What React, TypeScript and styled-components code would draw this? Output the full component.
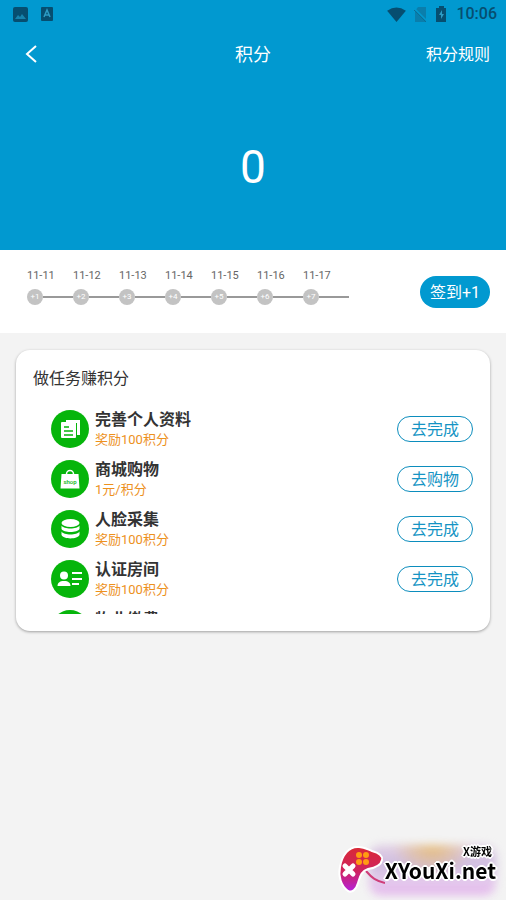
import React from "react";
import styled, { createGlobalStyle } from "styled-components";

const BLUE = "#0199d0";

const GlobalStyle = createGlobalStyle`
  * { box-sizing: border-box; }
  html, body, #root { min-height: 100vh; }
  body {
    margin: 0;
    background: #f3f3f3;
    font-family: Roboto, "Noto Sans CJK SC", sans-serif;
    color: #333;
  }
  button { font-family: inherit; cursor: pointer; }
`;

const Page = styled.div`
  display: flex;
  flex-direction: column;
  min-height: 100vh;
`;

const Hero = styled.header`
  display: flex;
  flex-direction: column;
  background: ${BLUE};
  color: #fff;
`;

const StatusBar = styled.div`
  display: flex;
  align-items: center;
  justify-content: space-between;
  height: 28px;
  padding: 0 9px 0 13px;
  color: #064e70;
`;

const StatusGroup = styled.div<{ $gap: number }>`
  display: flex;
  align-items: center;
  gap: ${({ $gap }) => $gap}px;
`;

const Clock = styled.time`
  font-size: 16px;
  line-height: 20px;
  font-weight: 500;
`;

const NavBar = styled.nav`
  display: grid;
  grid-template-columns: 1fr auto 1fr;
  align-items: center;
  height: 54px;
  padding: 0 16px;
`;

const BackButton = styled.button`
  display: flex;
  justify-self: start;
  padding: 4px 8px;
  border: 0;
  background: none;
  color: inherit;
`;

const PageTitle = styled.h1`
  margin: 0;
  font-size: 18px;
  line-height: 24px;
  font-weight: 400;
`;

const RulesLink = styled.a`
  justify-self: end;
  color: inherit;
  font-size: 16px;
  line-height: 24px;
  text-decoration: none;
`;

const Balance = styled.div`
  display: flex;
  align-items: center;
  justify-content: center;
  height: 168px;
  padding-top: 2px;
  font-size: 46px;
  line-height: 54px;
`;

const SignIn = styled.section`
  display: flex;
  align-items: center;
  justify-content: space-between;
  height: 83px;
  padding: 0 16px 0 27px;
  background: #fff;
`;

const Days = styled.ol`
  display: flex;
  margin: 0;
  padding: 0 0 10px;
  list-style: none;
`;

const Day = styled.li`
  display: flex;
  flex-direction: column;
  gap: 5px;
  width: 46px;
  font-size: 11px;
  line-height: 16px;
  color: #666;
`;

const Track = styled.div`
  display: flex;
  align-items: center;
  &::after {
    content: "";
    flex: 1;
    height: 2px;
    background: #999;
  }
`;

const Dot = styled.span`
  width: 16px;
  height: 16px;
  border-radius: 50%;
  background: #c3c3c3;
  color: #fff;
  font-size: 8px;
  line-height: 16px;
  text-align: center;
`;

const SignButton = styled.button`
  height: 32px;
  padding: 2px 10px 0;
  border: 0;
  border-radius: 16px;
  background: ${BLUE};
  color: #fff;
  font-size: 16px;
  line-height: 30px;
`;

const Card = styled.section`
  margin: 17px 16px;
  padding: 17px;
  border-radius: 14px;
  background: #fff;
  box-shadow: 0 1px 3px rgba(0, 0, 0, 0.35);
`;

const CardTitle = styled.h2`
  margin: 0 0 19px;
  font-size: 16px;
  line-height: 24px;
  font-weight: 400;
`;

const TaskList = styled.ul`
  height: 204px;
  margin: 0;
  padding: 0 0 0 18px;
  list-style: none;
  overflow: hidden;
`;

const Task = styled.li`
  display: flex;
  align-items: center;
  gap: 6px;
  height: 38px;
  margin-bottom: 12px;
`;

const TaskIcon = styled.svg`
  display: block;
  flex: none;
  width: 38px;
  height: 38px;
`;

const TaskText = styled.div`
  flex: 1;
`;

const TaskName = styled.h3`
  margin: 0;
  font-size: 16px;
  line-height: 22px;
  font-weight: 700;
`;

const Reward = styled.p`
  margin: 0;
  font-size: 13px;
  line-height: 18px;
  color: #ed911d;
`;

const TaskButton = styled.button`
  height: 26px;
  padding: 2px 13px 0;
  border: 1px solid #0c8dbd;
  border-radius: 13px;
  background: #fff;
  color: #1694c4;
  font-size: 16px;
  line-height: 22px;
`;

const Watermark = styled.aside`
  position: fixed;
  right: 10px;
  bottom: 5px;
  display: flex;
  align-items: flex-end;
  color: #000;
  font-family: "Noto Sans CJK SC", sans-serif;
  font-weight: 700;
  text-shadow: -2px 0 #fff, 2px 0 #fff, 0 -2px #fff, 0 2px #fff, 1px 1px #fff,
    -1px -1px #fff, 1px -1px #fff, -1px 1px #fff;
`;

const Glow = styled.div`
  position: absolute;
  inset: 2px 0 0 32px;
  border-radius: 12px;
  background:
    radial-gradient(ellipse at 50% 0, rgba(232, 185, 95, 0.8), transparent 45%),
    linear-gradient(180deg, rgba(215, 185, 220, 0.6), rgba(190, 165, 215, 0.7) 40%, rgba(226, 200, 235, 0.9) 70%, rgba(225, 165, 235, 0.8));
  filter: blur(4px);
`;

const Pad = styled.svg`
  position: relative;
  width: 48px;
  height: 52px;
`;

const Brand = styled.div`
  position: relative;
  display: flex;
  flex-direction: column;
  padding-bottom: 12px;
`;

const BrandTag = styled.span`
  align-self: flex-end;
  padding-right: 4px;
  font-size: 11px;
  line-height: 12px;
`;

const BrandName = styled.span`
  font-size: 21px;
  line-height: 26px;
`;

const DocumentGlyph = () => (
  <g>
    <path d="M15 10h14v15h-3V13H15z" fill="#fff" />
    <rect x="10" y="12" width="15" height="16" rx="1" fill="#fff" />
    <path d="M13 17h5M13 21h9M13 25h9" stroke="#06b50b" strokeWidth="1.5" />
  </g>
);

const ShopGlyph = () => (
  <g>
    <path d="M15.500 15v-1a3.500 3.500 0 0 1 7 0v1" fill="none" stroke="#fff" strokeWidth="1.500" />
    <path d="M10.500 14h17l1 14.500h-19z" fill="#fff" />
    <text x="19" y="24" textAnchor="middle" fontSize="6" fontWeight="500" fill="#06b50b">shop</text>
  </g>
);

const CoinsGlyph = () => (
  <g fill="#fff">
    <ellipse cx="19.500" cy="13" rx="9" ry="4" />
    <path d="M10.500 15.500c2 4 16 4 18 0v3.500c-2 4-16 4-18 0z" />
    <path d="M10.500 21.500c2 4 16 4 18 0V25c-2 4.500-16 4.500-18 0z" />
  </g>
);

const ContactGlyph = () => (
  <g fill="#fff">
    <circle cx="13" cy="15.500" r="4" />
    <path d="M6.500 26c0-3 2-5 6.500-5s6.500 2 6.500 5z" />
    <path d="M21 12h10v2H21zM21 18h10v2H21zM21 23h7v2h-7z" />
  </g>
);

const BillGlyph = () => (
  <g>
    <rect x="11" y="10" width="16" height="19" rx="2" fill="#fff" />
    <path d="M15 16h8M15 21h8" stroke="#06b50b" strokeWidth="2" />
  </g>
);

const days = ["11-11", "11-12", "11-13", "11-14", "11-15", "11-16", "11-17"];

const tasks = [
  { name: "完善个人资料", reward: "奖励100积分", action: "去完成", Glyph: DocumentGlyph },
  { name: "商城购物", reward: "1元/积分", action: "去购物", Glyph: ShopGlyph },
  { name: "人脸采集", reward: "奖励100积分", action: "去完成", Glyph: CoinsGlyph },
  { name: "认证房间", reward: "奖励100积分", action: "去完成", Glyph: ContactGlyph },
  { name: "物业缴费", reward: "奖励100积分", action: "去完成", Glyph: BillGlyph },
];

export default function App() {
  return (
    <Page>
      <GlobalStyle />
      <Hero>
        <StatusBar>
          <StatusGroup $gap={13}>
            <svg width="15" height="15" viewBox="0 0 15 15" aria-hidden="true">
              <rect width="15" height="15" rx="2" fill="currentColor" />
              <path d="M2 12l3-4 2 2 2-3 4 5z" fill="#1683ad" />
            </svg>
            <svg width="12" height="14" viewBox="0 0 12 14" aria-hidden="true">
              <rect width="12" height="14" rx="1" fill="currentColor" />
              <path d="M3 10l3-7 3 7M4 8h4" fill="none" stroke="#2c9bc4" strokeWidth="1.500" />
            </svg>
          </StatusGroup>
          <StatusGroup $gap={8}>
            <svg width="19" height="15" viewBox="0 0 20 16" aria-hidden="true">
              <path d="M0 4Q10-3 20 4L10 16z" fill="currentColor" />
            </svg>
            <svg width="13" height="15" viewBox="0 0 13 15" aria-hidden="true">
              <path d="M4 0h8v15H1V4z" fill="#0a7eac" />
              <path d="M0 1l13 13" stroke={BLUE} strokeWidth="1.500" />
              <path d="M0 3l12 12" stroke="#0a6f98" />
            </svg>
            <svg width="13" height="16" viewBox="0 0 13 16" aria-hidden="true">
              <path d="M4 0h5v2h2v14H1V2h3z" fill="currentColor" />
              <path d="M7 4L4 9h2v4l3-5H7z" fill="#2c9bc4" />
            </svg>
            <Clock>10:06</Clock>
          </StatusGroup>
        </StatusBar>
        <NavBar>
          <BackButton aria-label="返回">
            <svg width="15" height="20" viewBox="0 0 15 20" aria-hidden="true">
              <path d="M12 1L3 9l9 8" fill="none" stroke="currentColor" strokeWidth="2" />
            </svg>
          </BackButton>
          <PageTitle>积分</PageTitle>
          <RulesLink href="#rules">积分规则</RulesLink>
        </NavBar>
        <Balance>0</Balance>
      </Hero>
      <SignIn>
        <Days>
          {days.map((day, index) => (
            <Day key={day}>
              <span>{day}</span>
              <Track>
                <Dot>+{index + 1}</Dot>
              </Track>
            </Day>
          ))}
        </Days>
        <SignButton>签到+1</SignButton>
      </SignIn>
      <Card>
        <CardTitle>做任务赚积分</CardTitle>
        <TaskList>
          {tasks.map(({ name, reward, action, Glyph }) => (
            <Task key={name}>
              <TaskIcon viewBox="0 0 38 38" aria-hidden="true">
                <circle cx="19" cy="19" r="19" fill="#06b50b" />
                <Glyph />
              </TaskIcon>
              <TaskText>
                <TaskName>{name}</TaskName>
                <Reward>{reward}</Reward>
              </TaskText>
              <TaskButton>{action}</TaskButton>
            </Task>
          ))}
        </TaskList>
      </Card>
      <Watermark>
        <Glow />
        <Pad viewBox="0 0 48 52" aria-hidden="true">
          <defs>
            <linearGradient id="pad" x1="0" y1="0" x2="0" y2="1">
              <stop offset="0" stopColor="#d92a35" />
              <stop offset="0.550" stopColor="#cf2360" />
              <stop offset="1" stopColor="#b421dd" />
            </linearGradient>
          </defs>
          <path d="M29 28c6 7 10 10 19 12" fill="none" stroke="#cf3d79" strokeWidth="2" />
          <path
            d="M3 24C5 12 12 3 22 4c5 0 8 2 13 4 7 2 11 5 10 9-1 6-8 8-14 9-7 2-8 8-10 14-2 7-6 10-10 8C4 43 1 33 3 24z"
            fill="url(#pad)"
            stroke="#fff"
            strokeWidth="2"
          />
          <g fill="#ff9c12">
            <circle cx="22" cy="12" r="3" />
            <circle cx="29" cy="12" r="3" />
            <circle cx="22" cy="19" r="3" />
            <circle cx="29" cy="19" r="3" />
          </g>
          <path d="M8 23l8 8M16 23l-8 8" stroke="#fff" strokeWidth="5" strokeLinecap="round" />
        </Pad>
        <Brand>
          <BrandTag>X游戏</BrandTag>
          <BrandName>XYouXi.net</BrandName>
        </Brand>
      </Watermark>
    </Page>
  );
}
